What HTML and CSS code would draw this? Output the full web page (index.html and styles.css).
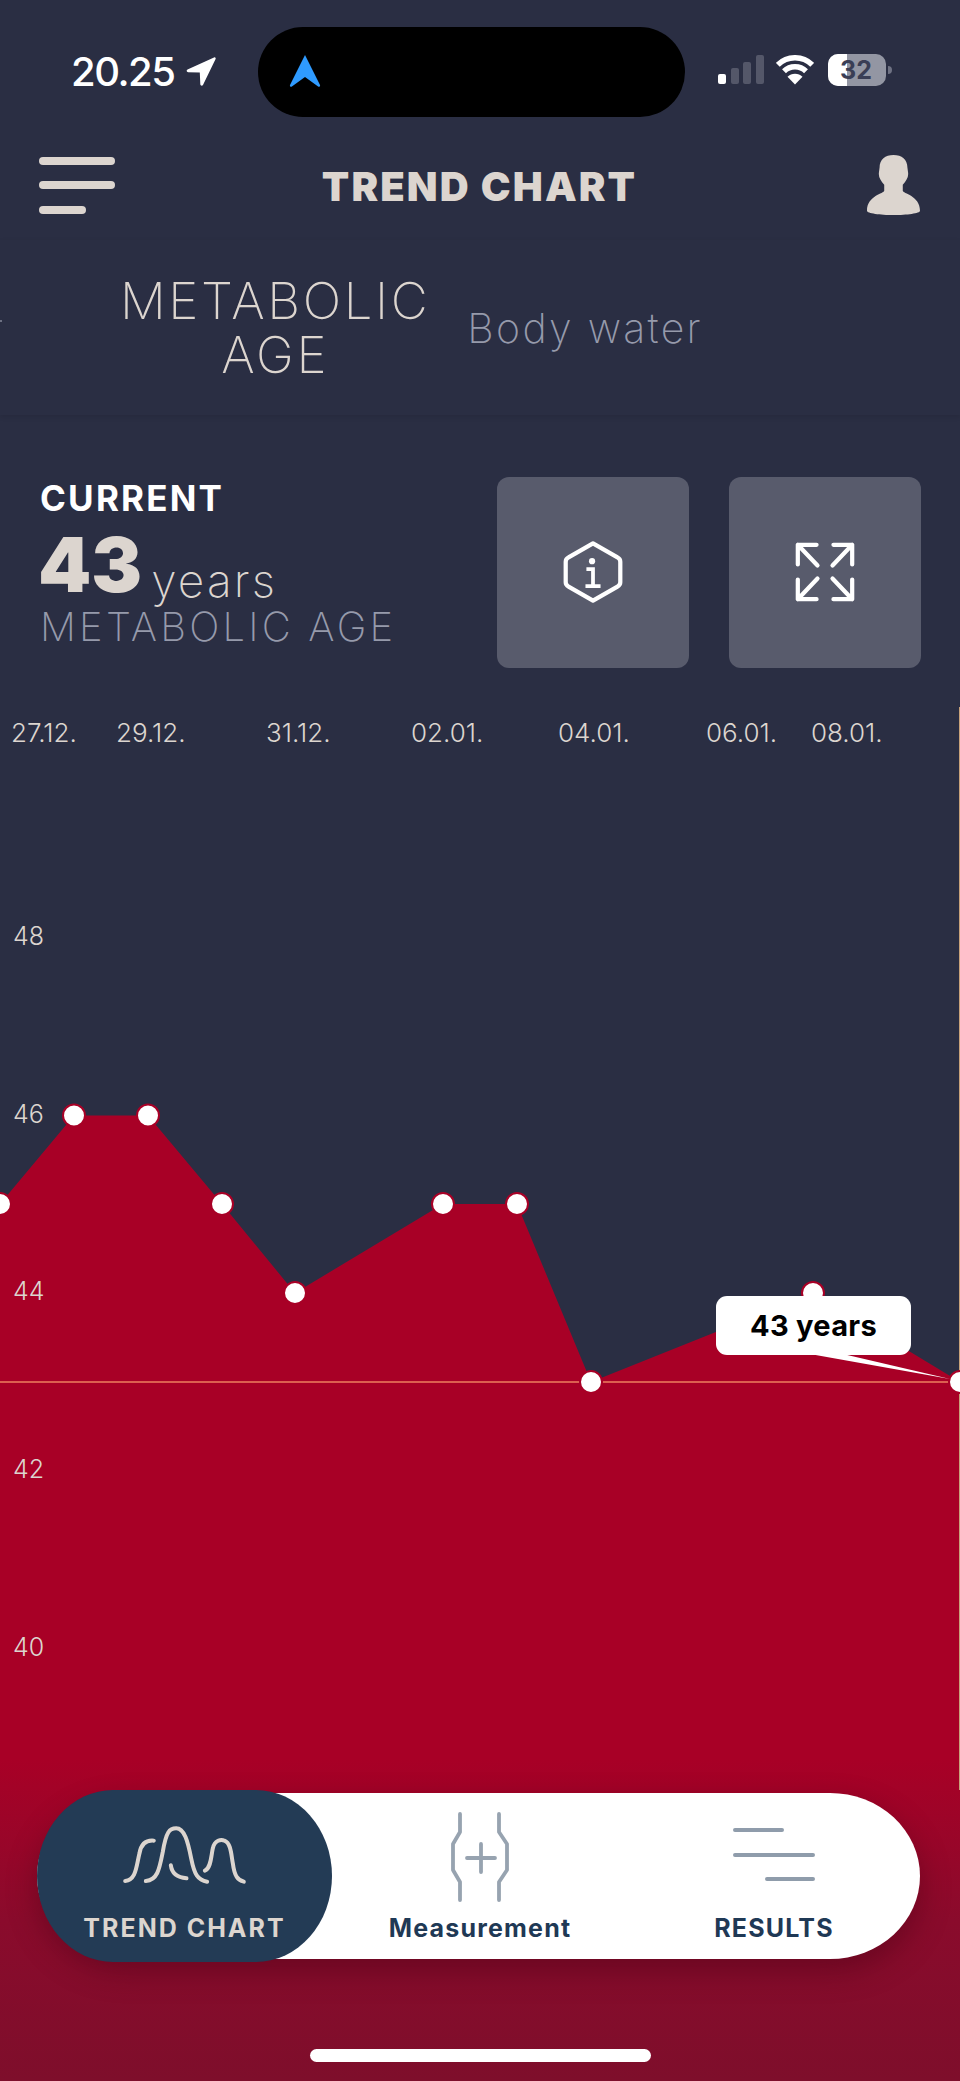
FILE: index.html
```html
<!DOCTYPE html>
<html lang="en">
<head>
<meta charset="utf-8">
<title>Trend chart</title>
<link rel="stylesheet" href="styles.css">
</head>
<body>
<div class="page">
  <div class="status">
    <div class="status-left">
      <span class="time">20.25</span>
      <svg class="loc" viewBox="0 0 32 32"><path d="M29 1.500 2.500 13.600c-1.400.7-1 2.600.6 2.600l11.700.4.500 11.700c.1 1.600 2.100 1.900 2.800.5L30.600 3c.5-1-.6-2-1.600-1.500Z"/></svg>
    </div>
    <div class="island">
      <svg class="nav-arrow" viewBox="0 0 32 34"><path d="M16 1 31 31c.5 1.300-.8 2.300-1.900 1.600L16 23 2.900 32.600C1.800 33.300.5 32.300 1 31Z"/></svg>
    </div>
    <div class="status-right">
      <div class="signal">
        <i class="bar bar-1"></i><i class="bar bar-2"></i><i class="bar bar-3"></i><i class="bar bar-4"></i>
      </div>
      <svg class="wifi" viewBox="0 0 38 30">
        <path class="wifi-arc" d="M1.800 9.800a24.500 24.500 0 0 1 34.400 0"/>
        <path class="wifi-arc" d="M8 16.300a15.500 15.500 0 0 1 22 0"/>
        <path class="wifi-dot" d="M19 29.500 11.500 21.800a10.500 10.500 0 0 1 15 0Z"/>
      </svg>
      <div class="battery"><div class="battery-body"><div class="battery-fill"></div><span class="battery-num">32</span></div><i class="battery-nub"></i></div>
    </div>
  </div>

  <header class="topbar">
    <div class="menu"><i class="menu-line"></i><i class="menu-line"></i><i class="menu-line menu-short"></i></div>
    <h1 class="title">TREND CHART</h1>
    <svg class="user" viewBox="560 402 160 181"><path d="M640 402C665 402 682 415 682 440L684 455C686 470 678 480 668 492L668 510C668 518 720 525 720 570C720 578 680 583 640 583C600 583 560 578 560 570C560 525 612 518 612 510L612 492C602 480 594 470 596 455L598 440C598 415 615 402 640 402Z"/></svg>
  </header>

  <nav class="tabs">
    <i class="tab-tick"></i>
    <div class="tab tab-active">METABOLIC<br>AGE</div>
    <div class="tab">Body water</div>
  </nav>

  <section class="summary">
    <div class="reading">
      <div class="reading-label">CURRENT</div>
      <div class="reading-value"><span class="reading-num">43</span><span class="reading-unit">years</span></div>
      <div class="reading-name">METABOLIC AGE</div>
    </div>
    <div class="actions">
      <button class="action">
        <svg class="action-icon" viewBox="0 0 64 68">
          <path class="line" d="M32 3.500 58 18.500Q61 20 61 23V45Q61 48 58 49.500L32 64.500 6 49.500Q3 48 3 45V23Q3 20 6 18.500Z"/>
          <circle class="solid" cx="31" cy="22.500" r="3.300"/>
          <path class="line-i" d="M25 31H32V49M24 49H40"/>
        </svg>
      </button>
      <button class="action">
        <svg class="action-icon action-expand" viewBox="0 0 64 64">
          <path class="line" d="M23 3H3V24M3 3 24 25M41 3H61V24M61 3 40 25M23 61H3V40M3 61 24 39M41 61H61V40M61 61 40 39"/>
        </svg>
      </button>
    </div>
  </section>

  <div class="chart">
    <svg class="chart-svg" viewBox="0 700 960 1381">
      <defs>
        <linearGradient id="redfade" gradientUnits="userSpaceOnUse" x1="0" y1="1760" x2="0" y2="2081">
          <stop offset="0" stop-color="#a80026"/>
          <stop offset="0.5" stop-color="#8a0b2c"/>
          <stop offset="1" stop-color="#7e0e2b"/>
        </linearGradient>
      </defs>
      <g class="dates">
        <text x="11" y="742">27.12.</text>
        <text x="116" y="742">29.12.</text>
        <text x="266" y="742">31.12.</text>
        <text x="411" y="742">02.01.</text>
        <text x="558" y="742">04.01.</text>
        <text x="706" y="742">06.01.</text>
        <text x="811" y="742">08.01.</text>
      </g>
      <line class="cursor" x1="959.500" y1="707" x2="959.500" y2="1790"/>
      <polygon fill="url(#redfade)" points="0,1204 74,1115.500 148,1115.500 222,1204 295,1293 443,1204 517,1204 591,1382 813,1293 960,1382 960,2081 0,2081"/>
      <line class="current" x1="0" y1="1382" x2="960" y2="1382"/>
      <line class="cursor" x1="959.500" y1="1382" x2="959.500" y2="1790"/>
      <g class="ticks">
        <text x="13" y="945">48</text>
        <text x="13" y="1123">46</text>
        <text x="13" y="1300">44</text>
        <text x="13" y="1478">42</text>
        <text x="13" y="1656">40</text>
      </g>
      <g class="dots">
        <circle cx="0" cy="1204" r="11"/>
        <circle cx="74" cy="1115.500" r="11"/>
        <circle cx="148" cy="1115.500" r="11"/>
        <circle cx="222" cy="1204" r="11"/>
        <circle cx="295" cy="1293" r="11"/>
        <circle cx="443" cy="1204" r="11"/>
        <circle cx="517" cy="1204" r="11"/>
        <circle cx="591" cy="1382" r="11"/>
        <circle cx="813" cy="1293" r="11"/>
        <circle cx="960" cy="1382" r="11"/>
      </g>
      <polygon class="pointer" points="810,1354 843,1354 950,1379"/>
    </svg>
    <div class="tip">43 years</div>
  </div>

  <div class="dock">
    <div class="dock-item dock-active">
      <div class="dock-icon">
        <svg class="ico-trend" viewBox="240 110 380 180">
          <path d="M252 278C285 275 285 235 295 195 300 165 315 155 338 157"/>
          <path d="M314 278C350 275 355 240 365 190 375 130 385 120 405 120 430 120 440 160 450 210 460 260 470 275 498 280"/>
          <path d="M389 231C392 255 410 268 436 270"/>
          <path d="M491 247C510 240 510 200 515 180 520 155 540 152 550 157 570 165 570 200 575 225 580 265 590 275 608 280"/>
        </svg>
      </div>
      <span class="dock-label">TREND CHART</span>
    </div>
    <div class="dock-item">
      <div class="dock-icon">
        <svg class="ico-measure" viewBox="0 0 60 90">
          <path d="M10 2V20L3 32V58L10 70V88M49 2V20L57 32V58L49 70V88M17 46H45M31 32V60"/>
        </svg>
      </div>
      <span class="dock-label">Measurement</span>
    </div>
    <div class="dock-item">
      <div class="dock-icon">
        <svg class="ico-results" viewBox="0 0 82 56">
          <path d="M2 3H49M2 28H80M34 52H80"/>
        </svg>
      </div>
      <span class="dock-label">RESULTS</span>
    </div>
  </div>

  <div class="home-bar"></div>
</div>
</body>
</html>
```

FILE: styles.css
```css
* { box-sizing: border-box; }
html, body { margin: 0; padding: 0; }
body { background: #2a2e43; font-family: "Inter", "Liberation Sans", sans-serif; }
i { display: block; }

.page { position: relative; width: 960px; height: 2081px; overflow: hidden; background: #2a2e43; display: flex; flex-direction: column; }

/* status bar */
.status { height: 130px; flex: none; padding: 27px 0 0 71px; display: flex; align-items: flex-start; }
.status-left { width: 187px; height: 90px; display: flex; align-items: center; gap: 11px; }
.time { color: #fff; font-size: 40px; font-weight: 500; line-height: 44px; letter-spacing: -1.500px; }
.loc { width: 32px; height: 32px; fill: #fff; flex: none; }
.island { width: 427px; height: 90px; background: #000; border-radius: 45px; padding-left: 31px; display: flex; align-items: center; }
.nav-arrow { width: 32px; height: 34px; fill: #2f9bff; margin-bottom: 3px; }
.status-right { margin-left: 33px; height: 90px; display: flex; align-items: flex-start; padding-top: 28px; }
.signal { display: flex; align-items: flex-end; gap: 4.500px; height: 29px; width: 45px; margin-right: 13px; }
.bar { width: 8px; border-radius: 2px; background: #545769; flex: none; }
.bar-1 { height: 10px; background: #fff; }
.bar-2 { height: 16px; }
.bar-3 { height: 22px; }
.bar-4 { height: 29px; }
.wifi { width: 38px; height: 30px; flex: none; margin-right: 14px; }
.wifi-arc { fill: none; stroke: #fff; stroke-width: 5.500px; }
.wifi-dot { fill: #fff; }
.battery { display: flex; align-items: center; height: 32px; margin-top: -1px; }
.battery-body { position: relative; width: 58px; height: 32px; border-radius: 10px; background: #9396a3; overflow: hidden; display: flex; align-items: center; justify-content: center; }
.battery-fill { position: absolute; left: 0; top: 0; bottom: 0; width: 19px; background: #fff; }
.battery-num { position: relative; color: #3a3e55; font-size: 25px; font-weight: 700; line-height: 32px; padding-right: 2px; }
.battery-nub { width: 4px; height: 8px; margin-left: 2px; background: #6f7283; border-radius: 0 4px 4px 0; }

/* header */
.topbar { height: 110px; flex: none; padding: 0 40px 0 39px; display: grid; grid-template-columns: 1fr auto 1fr; align-items: center; position: relative; }
.menu { width: 76px; display: flex; flex-direction: column; gap: 16.500px; }
.menu-line { height: 8px; border-radius: 4px; background: #dcd5cf; }
.menu-short { width: 47px; }
.title { margin: 3px 0 0; color: #dcd5cf; font-size: 40px; font-weight: 900; line-height: 48px; letter-spacing: 2.100px; }
.user { width: 53px; height: 60px; fill: #dcd5cf; justify-self: end; }

/* tabs */
.tabs { height: 175px; flex: none; display: flex; align-items: center; box-shadow: 0 2px 5px rgba(0, 0, 0, 0.1); position: relative; }
.tab-tick { width: 2px; height: 2px; margin-right: 118px; background: #6d7183; margin-top: -13px; }
.tab { font-weight: 200; font-size: 41px; line-height: 54px; letter-spacing: 2.300px; text-align: center; color: #969aab; margin-left: 37px; }
.tab-active { font-size: 51px; letter-spacing: 2.600px; color: #dcd5cf; margin-left: 0; }

/* summary */
.summary { height: 285px; flex: none; padding: 62px 39px 0 40px; display: flex; justify-content: space-between; align-items: flex-start; }
.reading { display: flex; flex-direction: column; }
.reading-label { color: #fff; font-size: 35px; font-weight: 700; line-height: 42px; letter-spacing: 2.200px; }
.reading-value { display: flex; align-items: flex-start; gap: 9px; height: 72px; margin-top: 9px; margin-left: -2px; }
.reading-num { color: #dcd5cf; font-size: 76px; font-weight: 900; line-height: 72px; }
.reading-unit { margin-top: 29px; color: #dcd5cf; font-size: 46px; font-weight: 200; line-height: 46px; letter-spacing: 2.200px; }
.reading-name { margin-top: 3px; color: #969aab; font-size: 40px; font-weight: 200; line-height: 48px; letter-spacing: 3.200px; white-space: nowrap; }
.actions { display: flex; gap: 40px; }
.action { width: 192px; height: 191px; padding: 0 0 1px; border: 0; border-radius: 12px; background: #585b6c; display: flex; align-items: center; justify-content: center; }
.action-icon { width: 64px; height: 64px; overflow: visible; }
.action-expand { width: 60px; height: 60px; }
.line { fill: none; stroke: #fff; stroke-width: 4.500px; stroke-linecap: round; stroke-linejoin: round; }
.line-i { fill: none; stroke: #fff; stroke-width: 4px; }
.solid { fill: #fff; }

/* chart */
.chart { position: relative; flex: 1; }
.chart-svg { display: block; width: 960px; height: 1381px; }
.dates text, .ticks text { fill: #dcd5cf; font-family: "Inter", "Liberation Sans", sans-serif; font-weight: 300; font-size: 26px; }
.ticks text { font-size: 25px; }
.cursor { stroke: #c8a27a; stroke-width: 1px; }
.current { stroke: #ee7f5f; stroke-width: 1.500px; }
.dots circle { fill: #fff; stroke: #a80026; stroke-width: 2px; }
.pointer { fill: #fff; }
.tip { position: absolute; left: 716px; top: 596px; width: 195px; height: 59px; border-radius: 11px; background: #fff; color: #000; font-size: 29px; font-weight: 700; line-height: 59px; letter-spacing: 0.300px; text-align: center; }

/* dock */
.dock { position: absolute; left: 37px; top: 1793px; width: 883px; height: 166px; border-radius: 90px / 83px; background: #fff; box-shadow: 0 12px 30px rgba(70, 0, 20, 0.45); display: grid; grid-template-columns: 295px 296px 292px; }
.dock-item { display: flex; flex-direction: column; align-items: center; height: 100%; padding-top: 19px; }
.dock-active { height: 172px; margin-top: -3px; padding-top: 20px; background: #233b55; border-radius: 76px / 86px; }
.dock-icon { height: 90px; display: flex; align-items: center; justify-content: center; }
.dock-label { margin-top: 11px; color: #1f3955; font-size: 25px; font-weight: 700; line-height: 30px; letter-spacing: 1.200px; white-space: nowrap; }
.dock-active .dock-label { color: #dcd5cf; margin-top: 13px; letter-spacing: 2px; }
.ico-trend { width: 127px; height: 60px; fill: none; stroke: #dcd5cf; stroke-width: 12px; stroke-linecap: round; }
.ico-measure { width: 60px; height: 90px; fill: none; stroke: #97a3b0; stroke-width: 3.800px; stroke-linecap: round; stroke-linejoin: round; }
.ico-results { width: 82px; height: 56px; margin-top: -4px; fill: none; stroke: #8f9cab; stroke-width: 4px; stroke-linecap: round; }
.home-bar { position: absolute; left: 310px; top: 2049px; width: 341px; height: 13px; border-radius: 7px; background: #fff; }
```
